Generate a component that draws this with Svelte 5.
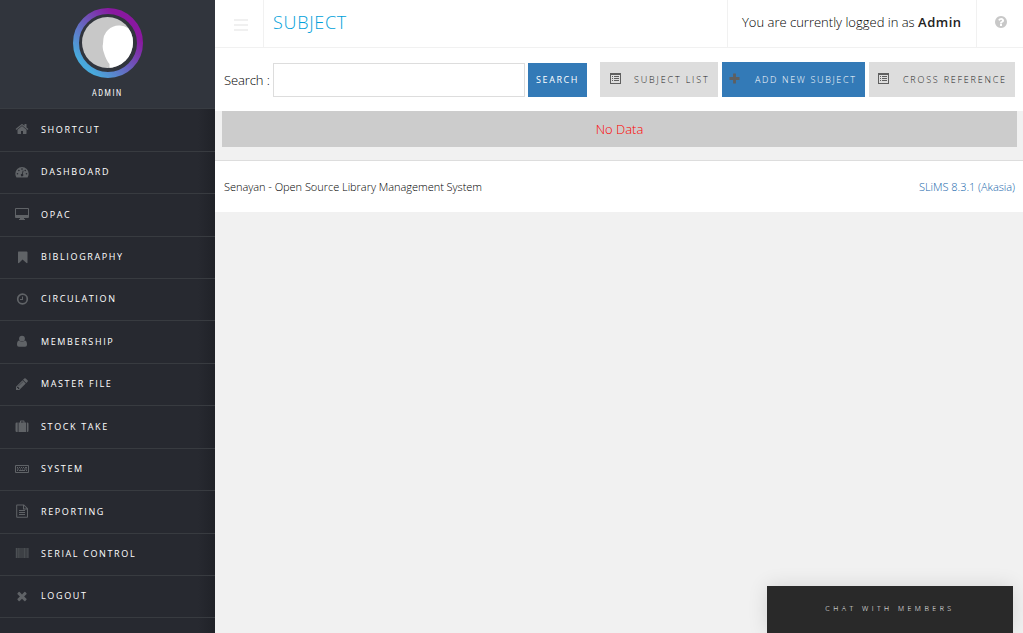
<script>
  const items = [
    ['Shortcut', 'home'], ['Dashboard', 'gauge'], ['OPAC', 'desktop'], ['Bibliography', 'bookmark'],
    ['Circulation', 'clock'], ['Membership', 'user'], ['Master File', 'pencil'], ['Stock Take', 'case'],
    ['System', 'keyboard'], ['Reporting', 'file'], ['Serial Control', 'barcode'], ['Logout', 'times']
  ];
</script>

{#snippet listIcon()}
  <svg class="list" width="11" height="11" viewBox="0 0 11 11" shape-rendering="crispEdges">
    <path fill-rule="evenodd" d="M0 0h11v11H0zM1 2v8h9V2z" />
    <path d="M2 3h1v1H2zM4 3h5v1H4zM2 5h1v1H2zM4 5h5v1H4zM2 7h1v1H2zM4 7h5v1H4z" />
  </svg>
{/snippet}

{#snippet icon(name)}
  {#if name === 'home'}
    <svg width="14" height="14" viewBox="0 0 1792 1792"><path d="M1472 992v480q0 26-19 45t-45 19h-384v-384h-256v384h-384q-26 0-45-19t-19-45v-480q0-1 .5-3t.5-3l575-474 575 474q1 2 1 6zm223-69l-62 74q-8 9-21 11h-3q-13 0-21-7l-692-577-692 577q-12 8-24 7-13-2-21-11l-62-74q-8-10-7-23.500t11-21.500l719-599q32-26 76-26t76 26l244 204v-195q0-14 9-23t23-9h192q14 0 23 9t9 23v408l219 182q10 8 11 21.500t-7 23.500z" /></svg>
  {:else if name === 'gauge'}
    <svg width="14" height="14" viewBox="0 0 14 14"><path fill-rule="evenodd" d="M7 2a6.700 6.700 0 0 1 6.700 6.700c0 1.300-.4 2.500-1 3.500-.1.200-.3.300-.5.300H1.800a.6.600 0 0 1-.5-.3c-.6-1-1-2.200-1-3.500A6.700 6.700 0 0 1 7 2zM2.500 7.900a.8.800 0 1 0 0 1.600.8.800 0 0 0 0-1.600zM3.900 4.700a.8.800 0 1 0 0 1.600.8.800 0 0 0 0-1.600zM7 3.300a.8.800 0 1 0 0 1.600.8.800 0 0 0 0-1.600zM10.200 4.700a.8.800 0 1 0 0 1.600.8.800 0 0 0 0-1.600zM11.500 7.900a.8.800 0 1 0 0 1.600.8.800 0 0 0 0-1.600zM7.700 5.500l-.7 3.200a1.300 1.300 0 1 0 .8.200l.8-3.200z" /></svg>
  {:else if name === 'desktop'}
    <svg width="14" height="12" viewBox="0 0 14 12"><path fill-rule="evenodd" d="M1 0h12q1 0 1 1v8q0 1-1 1H9v1h1v1H4v-1h1v-1H1q-1 0-1-1V1q0-1 1-1zM1 1v6h12V1z" /></svg>
  {:else if name === 'bookmark'}
    <svg width="14" height="14" viewBox="0 0 14 14"><path d="M3.500 1.500h8q1 0 1 1v10q0 1-1 .5L7.500 9.500 4 13q-1 .5-1-.5v-10q0-1 .5-1z" /></svg>
  {:else if name === 'clock'}
    <svg width="14" height="14" viewBox="0 0 14 14"><circle cx="7.500" cy="7" r="4.800" fill="none" stroke="currentColor" stroke-width="1.700" /><path d="M7 4.500h1v3.500H5V7h2z" /></svg>
  {:else if name === 'user'}
    <svg width="14" height="14" viewBox="0 0 14 14"><circle cx="7" cy="4.700" r="2.900" /><path d="M4 6.600Q7 9.300 10 6.600c1.600.2 2 2.300 2 4.200q0 1.900-1.900 1.900H3.900Q2 12.700 2 10.800c0-1.900.4-4 2-4.200z" /></svg>
  {:else if name === 'pencil'}
    <svg width="14" height="14" viewBox="0 0 1792 1792"><path d="M491 1536l91-91-235-235-91 91v107h128v128h107zm523-928q0-22-22-22-10 0-17 7l-542 542q-7 7-7 17 0 22 22 22 10 0 17-7l542-542q7-7 7-17zm-54-192l416 416-832 832h-416v-416zm683 96q0 53-37 90l-166 166-416-416 166-165q36-38 90-38 53 0 91 38l235 234q37 39 37 91z" /></svg>
  {:else if name === 'case'}
    <svg width="14" height="14" viewBox="0 0 14 14"><path fill-rule="evenodd" d="M3.500 3.500H5V2.200q0-.7.700-.7h3.100q.7 0 .7.700v1.300H11V13H3.500zM6 3.500h2.500v-1H6zM2.700 3.500V13h-.9Q.5 13 .5 11.700V4.800q0-1.300 1.300-1.300zM11.800 3.500h.4q1.300 0 1.300 1.300v6.900q0 1.300-1.300 1.300h-.4z" /></svg>
  {:else if name === 'keyboard'}
    <svg width="14" height="8" viewBox="0 0 14 8"><path fill-rule="evenodd" d="M1 0h12q1 0 1 1v6q0 1-1 1H1q-1 0-1-1V1q0-1 1-1zM1 1v6h12V1z" /><path d="M2 2h1v1H2zM4 2h1v1H4zM6 2h1v1H6zM8 2h1v1H8zM10 2h2v1h-2zM2 3.500h2v1H2zM5 3.500h1v1H5zM7 3.500h1v1H7zM9 3.500h3v1H9zM2 5h1v1H2zM4 5h6v1H4zM11 5h1v1h-1z" /></svg>
  {:else if name === 'file'}
    <svg width="12" height="14" viewBox="0 0 12 14"><path fill-rule="evenodd" d="M1 .5h7L12 4.500v8.500q0 .8-.8.800H1q-.8 0-.8-.8V1.300Q.2.500 1 .5zM1.200 1.500v11.300H11V5.500H7v-4zM8 1.800v2.700h2.700z" /><path d="M3 6h6v1H3zM3 8h6v1H3zM3 10h6v1H3z" /></svg>
  {:else if name === 'barcode'}
    <svg width="14" height="10" viewBox="0 0 14 10"><path opacity=".4" d="M.8 0h12.700v10H.8z" /><path opacity=".45" d="M.8 0h1.200v10H.8zM3.400 0h.8v10h-.8zM9.200 0h.8v10h-.8zM12.500 0h1v10h-1z" /></svg>
  {:else}
    <svg width="14" height="14" viewBox="0 0 1792 1792"><path d="M1490 1322q0 40-28 68l-136 136q-28 28-68 28t-68-28l-294-294-294 294q-28 28-68 28t-68-28l-136-136q-28-28-28-68t28-68l294-294-294-294q-28-28-28-68t28-68l136-136q28-28 68-28t68 28l294 294 294-294q28-28 68-28t68 28l136 136q28 28 28 68t-28 68l-294 294 294 294q28 28 28 68z" /></svg>
  {/if}
{/snippet}

<div class="app">
  <aside>
    <div class="profile">
      <svg width="70" height="70" viewBox="0 0 70 70">
        <defs>
          <linearGradient id="ring" x1="0.150" y1="0.850" x2="0.850" y2="0.150">
            <stop offset="0" stop-color="#48aadc" /><stop offset=".9" stop-color="#8a18a0" />
          </linearGradient>
          <clipPath id="face"><circle cx="34.500" cy="34.500" r="25.500" /></clipPath>
        </defs>
        <circle cx="35" cy="35" r="32" fill="none" stroke="url(#ring)" stroke-width="6" />
        <g clip-path="url(#face)">
          <path fill="#c8c8c8" d="M0 0h70v70H0z" />
          <path fill="#fff" d="M36.500 61V56Q33 52 31 45q-2-5-1-9 0-10 5-14 5-5 12-4.500Q56 18 60 26v35z" />
        </g>
      </svg>
      <span>ADMIN</span>
    </div>
    <nav>
      {#each items as [label, name]}
        <a href="#top"><i>{@render icon(name)}</i><span>{label}</span></a>
      {/each}
    </nav>
  </aside>

  <main>
    <header>
      <div class="toggle"><b></b><b></b><b></b></div>
      <h1>SUBJECT</h1>
      <div class="login">You are currently logged in as&nbsp;<strong>Admin</strong></div>
      <div class="help">
        <svg width="12" height="12" viewBox="128 128 1536 1536"><path d="M1024 1376v-192q0-14-9-23t-23-9h-192q-14 0-23 9t-9 23v192q0 14 9 23t23 9h192q14 0 23-9t9-23zm256-672q0-88-55.500-163t-138.500-116-170-41q-243 0-371 213-15 24 8 42l132 100q7 6 19 6 16 0 25-12 53-68 86-92 34-24 86-24 48 0 85.500 26t37.500 59q0 38-20 61t-68 45q-63 28-115.500 86.500t-52.500 125.500v36q0 14 9 23t23 9h192q14 0 23-9t9-23q0-19 21.500-49.500t54.500-49.500q32-18 49-28.500t46-35 44.500-48 28-60.500 12.500-81zm384 192q0 209-103 385.500t-279.500 279.500-385.500 103-385.500-103-279.500-279.500-103-385.500 103-385.500 279.500-279.500 385.500-103 385.500 103 279.500 279.500 103 385.500z" /></svg>
      </div>
    </header>

    <section class="tools">
      <label for="q">Search :</label>
      <input id="q" type="text" />
      <button class="primary search">SEARCH</button>
      <div class="actions">
        <button class="b1">{@render listIcon()}<span>SUBJECT LIST</span></button>
        <button class="b2 primary">
          <svg class="plus" width="11" height="11" viewBox="0 0 11 11"><path d="M4.100.5h2.800v3.600h3.600v2.800H6.900v3.600H4.100V6.900H.5V4.100h3.600z" /></svg>
          <span>ADD NEW SUBJECT</span>
        </button>
        <button class="b3">{@render listIcon()}<span>CROSS REFERENCE</span></button>
      </div>
    </section>

    <div class="nodata">No Data</div>
    <footer><span>Senayan - Open Source Library Management System</span><a href="#top">SLiMS 8.3.1 (Akasia)</a></footer>
  </main>
  <div class="chat">CHAT WITH MEMBERS</div>
</div>

<style>
  :global(body) { margin: 0; overflow: hidden; }
  .app { display: flex; height: 633px; position: relative; overflow: hidden; background: #f1f1f1; font-family: "Open Sans", sans-serif; font-weight: 300; color: #000; }
  * { box-sizing: border-box; }
  a { text-decoration: none; }
  svg { display: block; fill: currentColor; flex: none; }
  aside { width: 215px; flex: none; background: linear-gradient(90deg, transparent 198px, #202228 215px), #272930; }
  .profile { height: 109px; padding-top: 8px; background: #31353d; border-bottom: 1px solid #383c42; display: flex; flex-direction: column; align-items: center; }
  .profile span { color: #fff; font: 400 9px/12px Roboto, sans-serif; letter-spacing: 2px; margin-top: 9px; padding-right: 1px; transform: scaleX(.8); }
  nav { padding-top: .35px; }
  nav a { height: 42.425px; border-bottom: 1px solid #383b40; display: flex; align-items: center; color: #fff; font-weight: 400; font-size: 9px; letter-spacing: 1.630px; text-transform: uppercase; }
  nav a span { padding-bottom: 1.600px; }
  i { width: 14px; margin: 0 12px 1.600px 15px; display: flex; justify-content: center; color: #606367; }
  main { flex: 1; min-width: 0; }
  header { height: 48px; background: #fff; border-bottom: 1px solid #f1f1f1; display: flex; }
  .toggle { width: 49px; border-right: 1px solid #f1f1f1; padding: 19px 0 0 19px; display: flex; flex-direction: column; gap: 3px; }
  .toggle b { width: 14px; height: 2px; background: #f0f0f0; }
  h1 { margin: 0; flex: 1; padding-left: 9px; color: #009fda; font-size: 18px; line-height: 44px; font-weight: 300; letter-spacing: .7px; }
  .login { width: 250px; border-left: 1px solid #f1f1f1; border-right: 1px solid #f1f1f1; padding-left: 14px; font-size: 13px; line-height: 44px; white-space: nowrap; }
  .login strong { font-weight: 600; letter-spacing: .5px; color: #222; }
  .help { width: 46px; color: #c8c8c8; padding: 16px 0 0 18px; }
  .tools { height: 63px; background: #fff; padding: 14px 8px 0 9px; display: flex; font-size: 13px; }
  label { width: 49px; line-height: 36px; letter-spacing: -.1px; white-space: nowrap; }
  input { width: 252px; height: 34px; margin-top: 1px; border: 1px solid #ddd; padding: 0 8px; }
  button { height: 35px; border: 0; border-radius: 0; padding: 0; background: #ddd; color: #222; font: 300 9px "Open Sans", sans-serif; letter-spacing: 1.850px; display: flex; align-items: center; white-space: nowrap; }
  .primary { background: #337ab7; color: #fff; }
  .search { width: 59px; height: 34px; margin: 1px 0 0 3px; padding: 0 0 1px 8px; letter-spacing: 1.600px; font-weight: 400; }
  .actions { display: flex; gap: 4px; margin-left: 13px; }
  .actions svg { color: #5f5f5f; margin-top: -2px; }
  .actions span { margin-left: 13px; }
  .b1 { width: 118px; padding-left: 10px; }
  .b2 { width: 143px; padding-left: 7px; }
  .b2 span { margin-left: 15px; letter-spacing: 1.650px; }
  .b3 { width: 146px; padding-left: 9px; }
  .b3 span { margin-left: 14px; letter-spacing: 1.780px; }
  .nodata { margin: 0 6px 13px 7px; height: 36px; line-height: 36px; background: #ccc; color: #f00; text-align: center; font-size: 13px; }
  footer { height: 52px; background: #fff; border-top: 1px solid #ddd; padding: 0 8px 0 9px; display: flex; justify-content: space-between; font-size: 11px; line-height: 52px; letter-spacing: -.03px; }
  footer a { color: #1566ab; }
  .chat { position: absolute; left: 767px; top: 586px; width: 246px; height: 47px; background: #292929; color: #fff; text-align: center; font-size: 7px; line-height: 45px; letter-spacing: 3.500px; box-shadow: 0 0 20px rgba(0, 0, 0, .12); }
</style>
